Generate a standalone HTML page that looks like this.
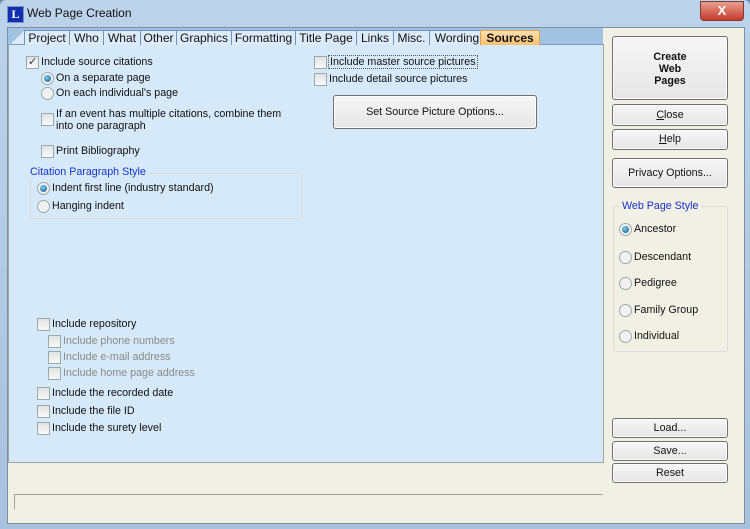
<!DOCTYPE html>
<html><head><style>
body{margin:0;width:750px;height:529px;overflow:hidden;background:#6d8fb5;font-family:"Liberation Sans",sans-serif;font-size:10.7px;color:#111}
.a{position:absolute}
#win{left:0;top:0;width:750px;height:529px;background:linear-gradient(#bcd3ea,#a7c2df);border-radius:6px 6px 0 0}
#client{left:7px;top:27px;width:736px;height:495px;background:#f1f0e4;border:1px solid #7f8fa3}
#tabbar{left:8px;top:28px;width:595px;height:16px;background:#a2c2e2}
#panel{left:8px;top:44px;width:594px;height:417px;background:#d5e9f9;border:1px solid #a0a8a0;border-top:1px solid #7a9ac0}
.tab{position:absolute;top:30px;height:14px;background:#dcebf9;border:1px solid #6f93bf;border-bottom:none;font-size:12px;line-height:14px;text-align:center}
.cb{position:absolute;width:11px;height:11px;border:1px solid #9aa;background:linear-gradient(#e2e2e2,#fafafa)}
.rb{position:absolute;width:11px;height:11px;border:1px solid #9aa;border-radius:50%;background:#f1f1f1}
.rb.on::after{content:"";position:absolute;left:2px;top:2px;width:7px;height:7px;border-radius:50%;background:radial-gradient(circle at 40% 35%,#7fd0f0,#0b4f82)}
.t{position:absolute;white-space:nowrap}
.btn{position:absolute;border:1px solid #707070;border-radius:3px;background:linear-gradient(#f6f6f6,#e6e6e6);text-align:center;box-shadow:inset 0 0 0 1px #fcfcfc}
.gray{color:#8a8a8a}
.grp{position:absolute;border:1px solid #dcdcdc;border-radius:3px}
.lg{position:absolute;color:#1a33cc;padding:0 3px}
</style></head><body>
<div id="win" class="a"></div>
<div class="a" style="left:7px;top:6px;width:15px;height:15px;background:#1030b0;border:1px solid #8090c0;color:#fff;font:bold 12px 'Liberation Serif',serif;text-align:center;line-height:15px">L</div>
<div class="t" style="left:27px;top:6px;font-size:12px">Web Page Creation</div>
<div class="a" style="left:700px;top:1px;width:42px;height:18px;border-radius:0 0 4px 4px;background:linear-gradient(#e8a090,#c5392a);border:1px solid #7a3b33;color:#fff;font-weight:bold;text-align:center;line-height:18px;font-size:13px">X</div>
<div id="client" class="a"></div>
<div id="tabbar" class="a"></div>
<div id="panel" class="a"></div>
<div class="a" style="left:10px;top:30px;width:16px;height:14px;background:linear-gradient(135deg,#a2c2e2 50%,#dcebf9 50%)"></div>
<div class="tab" style="left:24px;width:44px">Project</div>
<div class="tab" style="left:69px;width:33px">Who</div>
<div class="tab" style="left:103px;width:36px">What</div>
<div class="tab" style="left:140px;width:35px">Other</div>
<div class="tab" style="left:176px;width:54px">Graphics</div>
<div class="tab" style="left:231px;width:63px">Formatting</div>
<div class="tab" style="left:295px;width:60px">Title Page</div>
<div class="tab" style="left:356px;width:36px">Links</div>
<div class="tab" style="left:393px;width:35px">Misc.</div>
<div class="tab" style="left:429px;width:54px">Wording</div>
<div class="tab" style="left:480px;width:58px;background:linear-gradient(#fde0b0,#f8c070);font-weight:bold;border-color:#e0a050">Sources</div>

<div class="cb" style="left:26px;top:56px"><span style="position:absolute;left:1px;top:-2px;font-size:11px;color:#334">✓</span></div><div class="t" style="left:41px;top:56px">Include source citations</div>
<div class="rb on" style="left:41px;top:72px"></div><div class="t" style="left:56px;top:72px">On a separate page</div>
<div class="rb" style="left:41px;top:87px"></div><div class="t" style="left:56px;top:87px">On each individual's page</div>
<div class="cb" style="left:41px;top:113px"></div><div class="t" style="left:56px;top:108px;line-height:12px">If an event has multiple citations, combine them<br>into one paragraph</div>
<div class="cb" style="left:41px;top:145px"></div><div class="t" style="left:56px;top:145px">Print Bibliography</div>

<div class="grp" style="left:30px;top:173px;width:270px;height:44px"></div>
<div class="lg" style="left:27px;top:166px;background:#d5e9f9">Citation Paragraph Style</div>
<div class="rb on" style="left:37px;top:182px"></div><div class="t" style="left:52px;top:182px">Indent first line (industry standard)</div>
<div class="rb" style="left:37px;top:200px"></div><div class="t" style="left:52px;top:200px">Hanging indent</div>

<div class="cb" style="left:314px;top:56px"></div><div class="t" style="left:328px;top:55px;border:1px dotted #555;padding:0 1px">Include master source pictures</div>
<div class="cb" style="left:314px;top:73px"></div><div class="t" style="left:329px;top:73px">Include detail source pictures</div>
<div class="btn" style="left:333px;top:95px;width:202px;height:32px;line-height:32px">Set Source Picture Options...</div>

<div class="cb" style="left:37px;top:318px"></div><div class="t" style="left:52px;top:318px">Include repository</div>
<div class="cb" style="left:48px;top:335px"></div><div class="t gray" style="left:63px;top:335px">Include phone numbers</div>
<div class="cb" style="left:48px;top:351px"></div><div class="t gray" style="left:63px;top:351px">Include e-mail address</div>
<div class="cb" style="left:48px;top:367px"></div><div class="t gray" style="left:63px;top:367px">Include home page address</div>
<div class="cb" style="left:37px;top:387px"></div><div class="t" style="left:52px;top:387px">Include the recorded date</div>
<div class="cb" style="left:37px;top:405px"></div><div class="t" style="left:52px;top:405px">Include the file ID</div>
<div class="cb" style="left:37px;top:422px"></div><div class="t" style="left:52px;top:422px">Include the surety level</div>

<div class="a" style="left:14px;top:494px;width:587px;height:14px;border:1px solid #a0a0a0;border-bottom-color:#eee;border-right-color:#eee;background:#f1f0e4"></div>

<div class="btn" style="left:612px;top:36px;width:114px;height:62px;font-weight:bold;line-height:12px"><div style="padding-top:14px">Create<br>Web<br>Pages</div></div>
<div class="btn" style="left:612px;top:104px;width:114px;height:20px;line-height:20px"><u>C</u>lose</div>
<div class="btn" style="left:612px;top:129px;width:114px;height:19px;line-height:19px"><u>H</u>elp</div>
<div class="btn" style="left:612px;top:158px;width:114px;height:28px;line-height:28px">Privacy Options...</div>
<div class="grp" style="left:613px;top:206px;width:113px;height:144px"></div>
<div class="lg" style="left:619px;top:200px;background:#f1f0e4">Web Page Style</div>
<div class="rb on" style="left:619px;top:223px"></div><div class="t" style="left:634px;top:223px">Ancestor</div>
<div class="rb" style="left:619px;top:251px"></div><div class="t" style="left:634px;top:251px">Descendant</div>
<div class="rb" style="left:619px;top:277px"></div><div class="t" style="left:634px;top:277px">Pedigree</div>
<div class="rb" style="left:619px;top:304px"></div><div class="t" style="left:634px;top:304px">Family Group</div>
<div class="rb" style="left:619px;top:330px"></div><div class="t" style="left:634px;top:330px">Individual</div>
<div class="btn" style="left:612px;top:418px;width:114px;height:18px;line-height:18px">Load...</div>
<div class="btn" style="left:612px;top:441px;width:114px;height:18px;line-height:18px">Save...</div>
<div class="btn" style="left:612px;top:463px;width:114px;height:18px;line-height:18px">Reset</div>
</body></html>
